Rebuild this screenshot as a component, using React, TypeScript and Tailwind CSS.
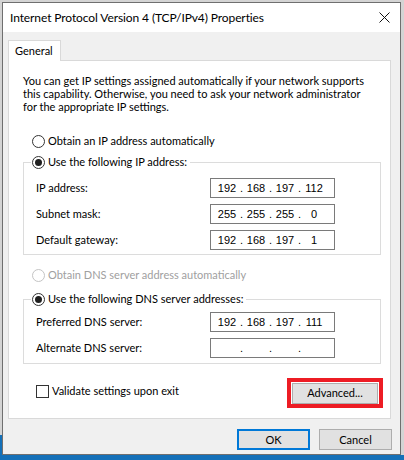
import { Fragment } from 'react';

const ui = "font-['Lato',sans-serif] text-[11px] text-black";

function Radio({ checked = false, disabled = false }: { checked?: boolean; disabled?: boolean }) {
  return (
    <span
      className={`w-[13px] h-[13px] rounded-full border bg-white flex items-center justify-center shrink-0 ${
        disabled ? 'border-[#c4c4c4]' : 'border-[#333333]'
      }`}
    >
      {checked && <span className="w-[7px] h-[7px] rounded-full bg-[#1f1f1f]" />}
    </span>
  );
}

function IpField({ value }: { value: string[] }) {
  return (
    <div className="w-[125px] h-[20px] border border-[#7a7a7a] bg-white flex items-center pl-[3px] font-['Liberation_Sans',sans-serif] text-[11px] leading-none">
      {value.map((v, i) => (
        <Fragment key={i}>
          <span className="w-[26px] text-center">{v}</span>
          {i < 3 && <span className="w-[3px] text-center">.</span>}
        </Fragment>
      ))}
    </div>
  );
}

function Row({ label, value }: { label: string; value: string[] }) {
  return (
    <div className="h-[26px] flex items-center pl-3">
      <span className="w-[174px] leading-[14px]">{label}</span>
      <IpField value={value} />
    </div>
  );
}

function Group({ legend, children, top, bottom }: { legend: string; children: React.ReactNode; top: string; bottom: string }) {
  return (
    <fieldset className="w-[358px] border border-[#dcdcdc] m-0 p-0">
      <legend className="ml-[7px] pl-[1px] pr-[3px] h-[14px] leading-[14px] flex items-center gap-[3px]">
        <Radio checked />
        <span>{legend}</span>
      </legend>
      <div className={`${top} ${bottom}`}>{children}</div>
    </fieldset>
  );
}

export default function App() {
  return (
    <div className={`w-[404px] h-[460px] bg-[#d4d4d4] flex flex-col overflow-hidden ${ui}`}>
      <div className="h-[2px] shrink-0" />
      <div className="flex flex-1 min-h-0">
        <div className="w-[2px] flex flex-col shrink-0">
          <div className="flex-1" />
          <div className="h-[20px] bg-[#1470b8]" />
        </div>
        {/* dialog window */}
        <div className="w-[399px] h-[453px] shrink-0 border border-[#6f6f6f] bg-[#f0f0f0] flex flex-col">
          <div className="h-[29px] shrink-0 bg-white flex items-center pl-[7px] pr-[10px]">
            <span className="leading-[16px] text-[12px] tracking-[-0.1px]">Internet Protocol Version 4 (TCP/IPv4) Properties</span>
            <svg className="ml-auto" width="11" height="11" viewBox="0 0 11 11">
              <path d="M0.5 0.5 L10.5 10.5 M10.5 0.5 L0.5 10.5" stroke="#111" strokeWidth="1" />
            </svg>
          </div>

          <div className="flex-1 pt-[8px] pl-[5px] flex flex-col">
            <div className="relative z-10 -mb-px w-[53px] h-[21px] shrink-0 border border-b-0 border-[#d9d9d9] bg-white pl-[6px] flex items-center">
              <span className="leading-[14px]">General</span>
            </div>

            <div className="w-[383px] shrink-0 border border-[#d9d9d9] bg-white pt-[13px] pl-[14px] pr-[9px] pb-[10px] flex flex-col">
              <p className="leading-[13px] whitespace-nowrap">
                You can get IP settings assigned automatically if your network supports
                <br />
                this capability. Otherwise, you need to ask your network administrator
                <br />
                for the appropriate IP settings.
              </p>

              <div className="mt-[21px] h-[14px] pl-[9px] flex items-center gap-[3px] leading-[14px]">
                <Radio />
                <span>Obtain an IP address automatically</span>
              </div>

              <div className="mt-[7px]">
                <Group legend="Use the following IP address:" top="pt-[6px]" bottom="pb-[1px]">
                  <Row label="IP address:" value={['192', '168', '197', '112']} />
                  <Row label="Subnet mask:" value={['255', '255', '255', '0']} />
                  <Row label="Default gateway:" value={['192', '168', '197', '1']} />
                </Group>
              </div>

              <div className="mt-[13px] h-[14px] pl-[9px] flex items-center gap-[3px] leading-[14px] text-[#a0a0a0]">
                <Radio disabled />
                <span>Obtain DNS server address automatically</span>
              </div>

              <div className="mt-[10px]">
                <Group legend="Use the following DNS server addresses:" top="pt-[3px]" bottom="pb-[2px]">
                  <Row label="Preferred DNS server:" value={['192', '168', '197', '111']} />
                  <Row label="Alternate DNS server:" value={['', '', '', '']} />
                </Group>
              </div>

              <div className="mt-[14px] h-[30px] flex items-start">
                <label className="mt-[6px] pl-[13px] h-[14px] flex items-center gap-[3px] leading-[14px]">
                  <span className="w-[13px] h-[13px] border border-[#333333] bg-white shrink-0" />
                  <span>Validate settings upon exit</span>
                </label>
                <div className="ml-auto -mr-[2px] w-[96px] h-[30px] border-4 border-[#ed1c24] flex items-center justify-center">
                  <button className="w-[86px] h-[21px] bg-[#e1e1e1] border border-[#adadad] leading-[14px]">
                    Advanced...
                  </button>
                </div>
              </div>
            </div>

            <div className="mt-[10px] pr-[8px] flex justify-end gap-[9px]">
              <button className="w-[73px] h-[21px] bg-[#e1e1e1] border-2 border-[#0078d7] leading-[14px]">OK</button>
              <button className="w-[73px] h-[21px] bg-[#e1e1e1] border border-[#adadad] leading-[14px]">Cancel</button>
            </div>
          </div>
        </div>
        <div className="flex-1" />
      </div>
      <div className="h-[5px] shrink-0 bg-[#1470b8]" />
    </div>
  );
}
